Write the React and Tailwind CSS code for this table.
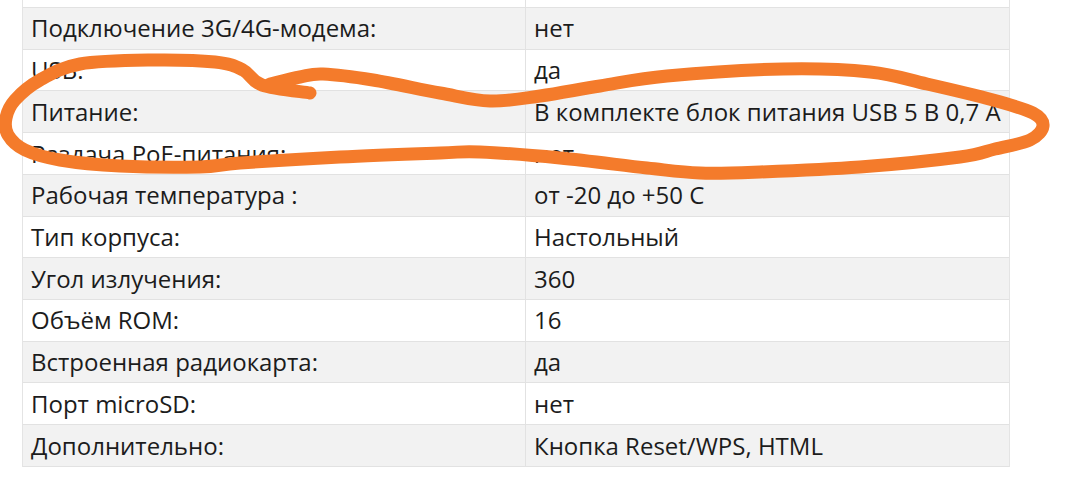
import React from "react";

const rows = [
  ["Подключение 3G/4G-модема:", "нет"],
  ["USB:", "да"],
  ["Питание:", "В комплекте блок питания USB 5 В 0,7 А"],
  ["Раздача PoE-питания:", "нет"],
  ["Рабочая температура :", "от -20 до +50 С"],
  ["Тип корпуса:", "Настольный"],
  ["Угол излучения:", "360"],
  ["Объём ROM:", "16"],
  ["Встроенная радиокарта:", "да"],
  ["Порт microSD:", "нет"],
  ["Дополнительно:", "Кнопка Reset/WPS, HTML"],
];

// hand-drawn marker loop, center line
const pts = [
  [270, 84], [300, 77], [323, 74], [373, 80], [440, 93], [490, 101], [540, 96],
  [600, 86], [667, 76], [783, 69], [870, 72], [927, 84], [993, 100], [1033, 113],
  [1043, 126], [1030, 140], [995, 149], [960, 157], [860, 167], [760, 172],
  [700, 173], [647, 168], [560, 158], [480, 152], [440, 153], [340, 157],
  [240, 163], [200, 167], [120, 166], [60, 160], [25, 150], [8, 135], [6, 118],
  [15, 100], [40, 80], [80, 64], [150, 60], [215, 62], [243, 70], [262, 85],
  [310, 93],
];

function smoothPath(p) {
  let d = `M${p[0][0]} ${p[0][1]}`;
  for (let i = 0; i < p.length - 1; i++) {
    const p0 = p[i - 1] || p[i];
    const p1 = p[i];
    const p2 = p[i + 1];
    const p3 = p[i + 2] || p2;
    const c1 = [p1[0] + (p2[0] - p0[0]) / 6, p1[1] + (p2[1] - p0[1]) / 6];
    const c2 = [p2[0] - (p3[0] - p1[0]) / 6, p2[1] - (p3[1] - p1[1]) / 6];
    d += ` C${c1[0]} ${c1[1]} ${c2[0]} ${c2[1]} ${p2[0]} ${p2[1]}`;
  }
  return d;
}

function Row({ label, value, gray }) {
  return (
    <div
      className={`flex h-[41.73px] border-b border-[#e2e2e2] ${
        gray ? "bg-[#f2f2f2]" : "bg-white"
      }`}
    >
      <div className="w-[503px] shrink-0 flex items-center pl-2 border-r border-[#e2e2e2]">
        {label}
      </div>
      <div className="flex-1 flex items-center pl-2">{value}</div>
    </div>
  );
}

export default function App() {
  return (
    <div
      className="relative w-[1080px] h-[489px] overflow-hidden bg-white text-[24px] leading-none text-[#1c1c1c]"
      style={{ fontFamily: "'Open Sans', Lato, sans-serif" }}
    >
      <div className="ml-[22px] w-[988px] border-l border-r border-[#e4e4e4]">
        {/* tail of the previous row */}
        <div className="flex h-[8px] border-b border-[#e2e2e2] bg-white">
          <div className="w-[503px] shrink-0 border-r border-[#e2e2e2]" />
        </div>
        {rows.map(([l, v], i) => (
          <Row key={l} label={l} value={v} gray={i % 2 === 0} />
        ))}
      </div>

      {/* orange marker scribble */}
      <svg
        className="absolute left-0 top-0 pointer-events-none"
        width="1080"
        height="489"
        viewBox="0 0 1080 489"
      >
        <path
          d={smoothPath(pts)}
          fill="none"
          stroke="#f47b2b"
          strokeWidth="13"
          strokeLinecap="round"
          strokeLinejoin="round"
        />
      </svg>
    </div>
  );
}
